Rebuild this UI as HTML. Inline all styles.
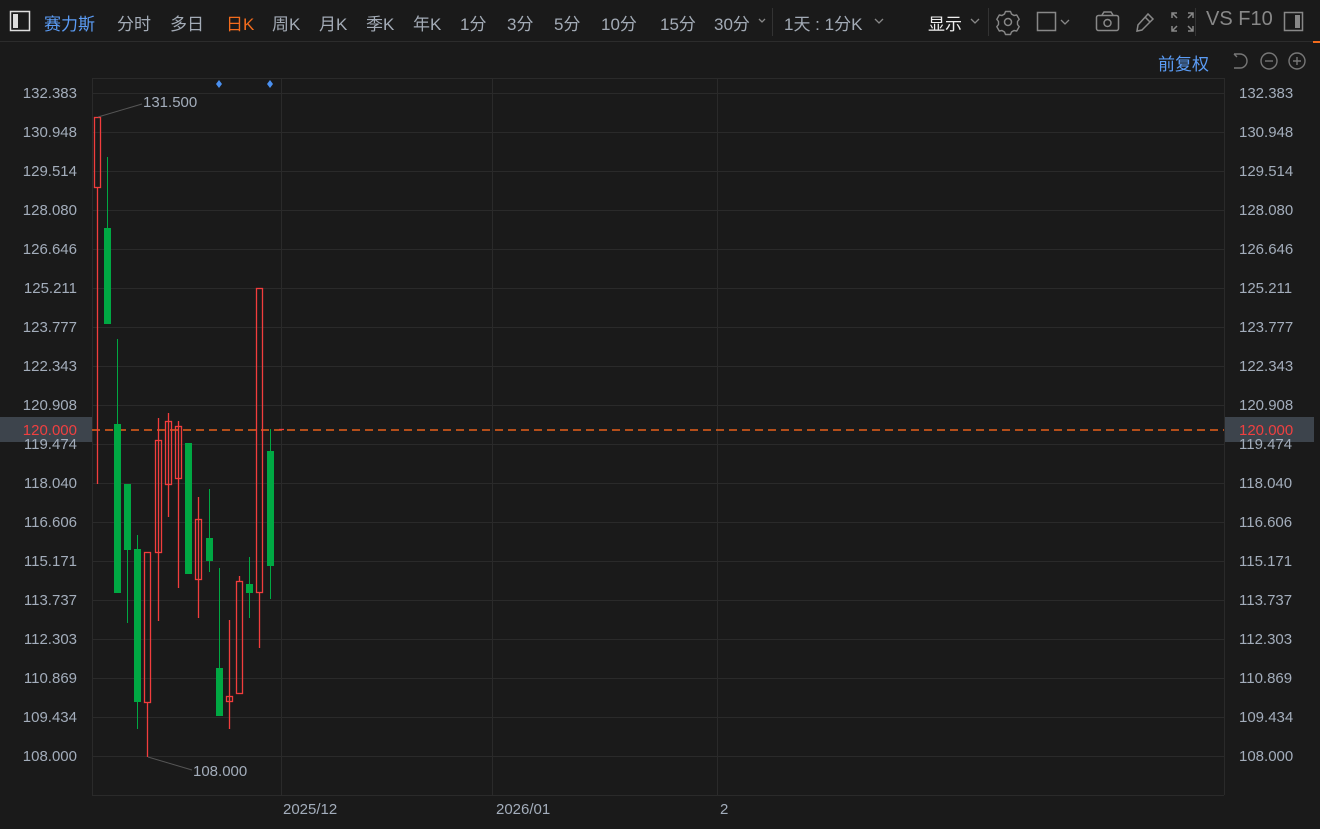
<!DOCTYPE html><html><head><meta charset="utf-8"><style>
body{margin:0;width:1320px;height:829px;background:#1a1a1a;overflow:hidden;font-family:"Liberation Sans","Noto Sans CJK SC",sans-serif;position:relative}
.t{position:absolute;top:10px;font-size:17px;color:#a3abb6;white-space:nowrap}
.ax{position:absolute;font-size:15px;color:#a3adbb}
</style></head><body>
<div style="position:absolute;left:0;top:41px;width:1320px;height:1px;background:#2c2c2c"></div>
<div style="position:absolute;left:1313px;top:41px;width:7px;height:2px;background:#f26b1d"></div>
<svg style="position:absolute;left:0;top:0" width="1320" height="42">
<rect x="10.5" y="11.5" width="19" height="19" fill="none" stroke="#ddd" stroke-width="1.5"/><rect x="13" y="14" width="5" height="14" fill="#ddd"/>
<path d="M759 19l3 3 3-3" fill="none" stroke="#888" stroke-width="1.3"/>
<path d="M875 19l4 4 4-4" fill="none" stroke="#888" stroke-width="1.3"/>
<path d="M971 19l4 4 4-4" fill="none" stroke="#888" stroke-width="1.3"/>
<line x1="772.5" y1="8" x2="772.5" y2="36" stroke="#333"/><line x1="988.5" y1="8" x2="988.5" y2="36" stroke="#333"/><line x1="1195.5" y1="8" x2="1195.5" y2="36" stroke="#333"/>
<circle cx="1008" cy="22" r="3.5" fill="none" stroke="#888" stroke-width="1.5"/>
<path d="M1005.5 11.5h5l1 2.5 2.5 1.5 2.7-.5 2.5 4.3-1.7 2.2v3l1.7 2.2-2.5 4.3-2.7-.5-2.5 1.5-1 2.5h-5l-1-2.5-2.5-1.5-2.7.5-2.5-4.3 1.7-2.2v-3l-1.7-2.2 2.5-4.3 2.7.5 2.5-1.5z" fill="none" stroke="#888" stroke-width="1.4" stroke-linejoin="round"/>
<rect x="1037.5" y="12.5" width="18" height="18" fill="none" stroke="#888" stroke-width="1.5"/>
<path d="M1061 20l4 4 4-4" fill="none" stroke="#888" stroke-width="1.3"/>
<rect x="1096.5" y="15.5" width="22" height="15" rx="2" fill="none" stroke="#888" stroke-width="1.5"/><path d="M1102 15l2-3h7l2 3" fill="none" stroke="#888" stroke-width="1.5"/><circle cx="1107.5" cy="23" r="3.5" fill="none" stroke="#888" stroke-width="1.5"/>
<path d="M1137 31l1-6 10-11 5 5-11 11z M1145 17l5 5" fill="none" stroke="#888" stroke-width="1.5"/>
<path d="M1172 18v-5h5M1188 13h5v5M1193 26v5h-5M1177 31h-5v-5M1172 13l5 5M1193 13l-5 5M1193 31l-5-5M1172 31l5-5" fill="none" stroke="#888" stroke-width="1.5"/>
<rect x="1284.5" y="12.5" width="18" height="18" fill="none" stroke="#888" stroke-width="1.5"/><rect x="1295" y="15" width="5" height="13" fill="#888"/>
</svg>
<div class="t" style="left:44px;color:#5b9cf5">赛力斯</div>
<div class="t" style="left:117px">分时</div><div class="t" style="left:170px">多日</div>
<div class="t" style="left:226px;color:#f26b1d">日K</div><div class="t" style="left:272px">周K</div><div class="t" style="left:319px">月K</div><div class="t" style="left:366px">季K</div><div class="t" style="left:413px">年K</div>
<div class="t" style="left:460px">1分</div><div class="t" style="left:507px">3分</div><div class="t" style="left:554px">5分</div><div class="t" style="left:601px">10分</div><div class="t" style="left:660px">15分</div><div class="t" style="left:714px">30分</div>
<div class="t" style="left:784px">1天 : 1分K</div><div class="t" style="left:928px;color:#eee">显示</div>
<div class="t" style="left:1206px;font-size:20px;top:8px;color:#888">VS F10</div>
<div class="t" style="left:1158px;top:50px;color:#5b9cf5">前复权</div>
<svg style="position:absolute;left:1230px;top:50px" width="80" height="22">
<path d="M4 4h6a7 7 0 0 1 0 14h-6M4 4l3 3" fill="none" stroke="#777" stroke-width="1.4"/>
<circle cx="39" cy="11" r="8" fill="none" stroke="#777" stroke-width="1.4"/><path d="M35 11h8" stroke="#777" stroke-width="1.4"/>
<circle cx="67" cy="11" r="8" fill="none" stroke="#777" stroke-width="1.4"/><path d="M63 11h8M67 7v8" stroke="#777" stroke-width="1.4"/>
</svg>
<svg style="position:absolute;left:0;top:0" width="1320" height="829">
<g stroke="#2a2a2a" stroke-width="1">
<line x1="92" y1="78.5" x2="1224" y2="78.5"/><line x1="92" y1="795.5" x2="1224" y2="795.5"/>
<line x1="92.5" y1="78" x2="92.5" y2="795"/><line x1="1224.5" y1="78" x2="1224.5" y2="795"/>
<line x1="281.5" y1="78" x2="281.5" y2="795"/><line x1="492.5" y1="78" x2="492.5" y2="795"/><line x1="717.5" y1="78" x2="717.5" y2="795"/>
<line x1="92" y1="93.5" x2="1224" y2="93.5"/><line x1="92" y1="132.5" x2="1224" y2="132.5"/><line x1="92" y1="171.5" x2="1224" y2="171.5"/><line x1="92" y1="210.5" x2="1224" y2="210.5"/><line x1="92" y1="249.5" x2="1224" y2="249.5"/><line x1="92" y1="288.5" x2="1224" y2="288.5"/><line x1="92" y1="327.5" x2="1224" y2="327.5"/><line x1="92" y1="366.5" x2="1224" y2="366.5"/><line x1="92" y1="405.5" x2="1224" y2="405.5"/><line x1="92" y1="444.5" x2="1224" y2="444.5"/><line x1="92" y1="483.5" x2="1224" y2="483.5"/><line x1="92" y1="522.5" x2="1224" y2="522.5"/><line x1="92" y1="561.5" x2="1224" y2="561.5"/><line x1="92" y1="600.5" x2="1224" y2="600.5"/><line x1="92" y1="639.5" x2="1224" y2="639.5"/><line x1="92" y1="678.5" x2="1224" y2="678.5"/><line x1="92" y1="717.5" x2="1224" y2="717.5"/><line x1="92" y1="756.5" x2="1224" y2="756.5"/>
</g>
<rect x="0" y="417" width="92" height="25" fill="#3d444c"/><rect x="1225" y="417" width="89" height="25" fill="#3d444c"/>
<line x1="92" y1="430" x2="1224" y2="430" stroke="#e8601a" stroke-width="1.5" stroke-dasharray="8,5"/>
<g fill="#00a843" stroke="#00a843">
<line x1="107.5" y1="157" x2="107.5" y2="228"/><rect x="104" y="228" width="7" height="96" stroke="none"/>
<line x1="117.5" y1="339" x2="117.5" y2="424"/><rect x="114" y="424" width="7" height="169" stroke="none"/>
<line x1="127.5" y1="550" x2="127.5" y2="623"/><rect x="124" y="484" width="7" height="66" stroke="none"/>
<line x1="137.5" y1="535" x2="137.5" y2="729"/><rect x="134" y="549" width="7" height="153" stroke="none"/>
<rect x="185" y="443" width="7" height="131" stroke="none"/>
<line x1="209.5" y1="489" x2="209.5" y2="572"/><rect x="206" y="538" width="7" height="23" stroke="none"/>
<line x1="219.5" y1="568" x2="219.5" y2="668"/><rect x="216" y="668" width="7" height="48" stroke="none"/>
<line x1="249.5" y1="557" x2="249.5" y2="618"/><rect x="246" y="584" width="7" height="9" stroke="none"/>
<line x1="270.5" y1="429" x2="270.5" y2="599"/><rect x="267" y="451" width="7" height="115" stroke="none"/>
</g>
<g fill="none" stroke="#f23d3d" stroke-width="1.3">
<line x1="97.5" y1="187" x2="97.5" y2="484"/><rect x="94.5" y="117.5" width="6" height="70"/>
<line x1="147.5" y1="702" x2="147.5" y2="757"/><rect x="144.5" y="552.5" width="6" height="150"/>
<line x1="158.5" y1="418" x2="158.5" y2="621"/><rect x="155.5" y="440.5" width="6" height="112"/>
<line x1="168.5" y1="413" x2="168.5" y2="517"/><rect x="165.5" y="421.5" width="6" height="63"/>
<line x1="178.5" y1="421" x2="178.5" y2="588"/><rect x="175.5" y="426.5" width="6" height="52"/>
<line x1="198.5" y1="497" x2="198.5" y2="618"/><rect x="195.5" y="519.5" width="6" height="60"/>
<line x1="229.5" y1="620" x2="229.5" y2="729"/><rect x="226.5" y="696.5" width="6" height="5"/>
<line x1="239.5" y1="576" x2="239.5" y2="581"/><rect x="236.5" y="581.5" width="6" height="112"/>
<line x1="259.5" y1="592" x2="259.5" y2="648"/><rect x="256.5" y="288.5" width="6" height="304"/>
<line x1="279" y1="429.5" x2="284" y2="429.5"/>
</g>
<line x1="98" y1="117" x2="142" y2="104" stroke="#555"/><line x1="148" y1="757" x2="192" y2="770" stroke="#555"/>
<path d="M219 80l3 4-3 4-3-4z M270 80l3 4-3 4-3-4z" fill="#4a90f0"/>
</svg>
<div class="ax" style="left:143px;top:94px">131.500</div><div class="ax" style="left:193px;top:763px">108.000</div>
<div class="ax" style="left:283px;top:801px">2025/12</div><div class="ax" style="left:496px;top:801px">2026/01</div><div class="ax" style="left:720px;top:801px">2</div>
<div id="L"></div>
<script>
var v=["132.383","130.948","129.514","128.080","126.646","125.211","123.777","122.343","120.908","119.474","118.040","116.606","115.171","113.737","112.303","110.869","109.434","108.000"],h="";
for(var i=0;i<v.length;i++){var y=85+i*39;h+='<div class="ax" style="right:1243px;top:'+y+'px">'+v[i]+'</div><div class="ax" style="left:1239px;top:'+y+'px">'+v[i]+'</div>';}
h+='<div class="ax" style="right:1243px;top:422px;color:#f04040;background:#3d444c">120.000</div><div class="ax" style="left:1239px;top:422px;color:#f04040;background:#3d444c">120.000</div>';
document.getElementById("L").innerHTML=h;
</script>
</body></html>
